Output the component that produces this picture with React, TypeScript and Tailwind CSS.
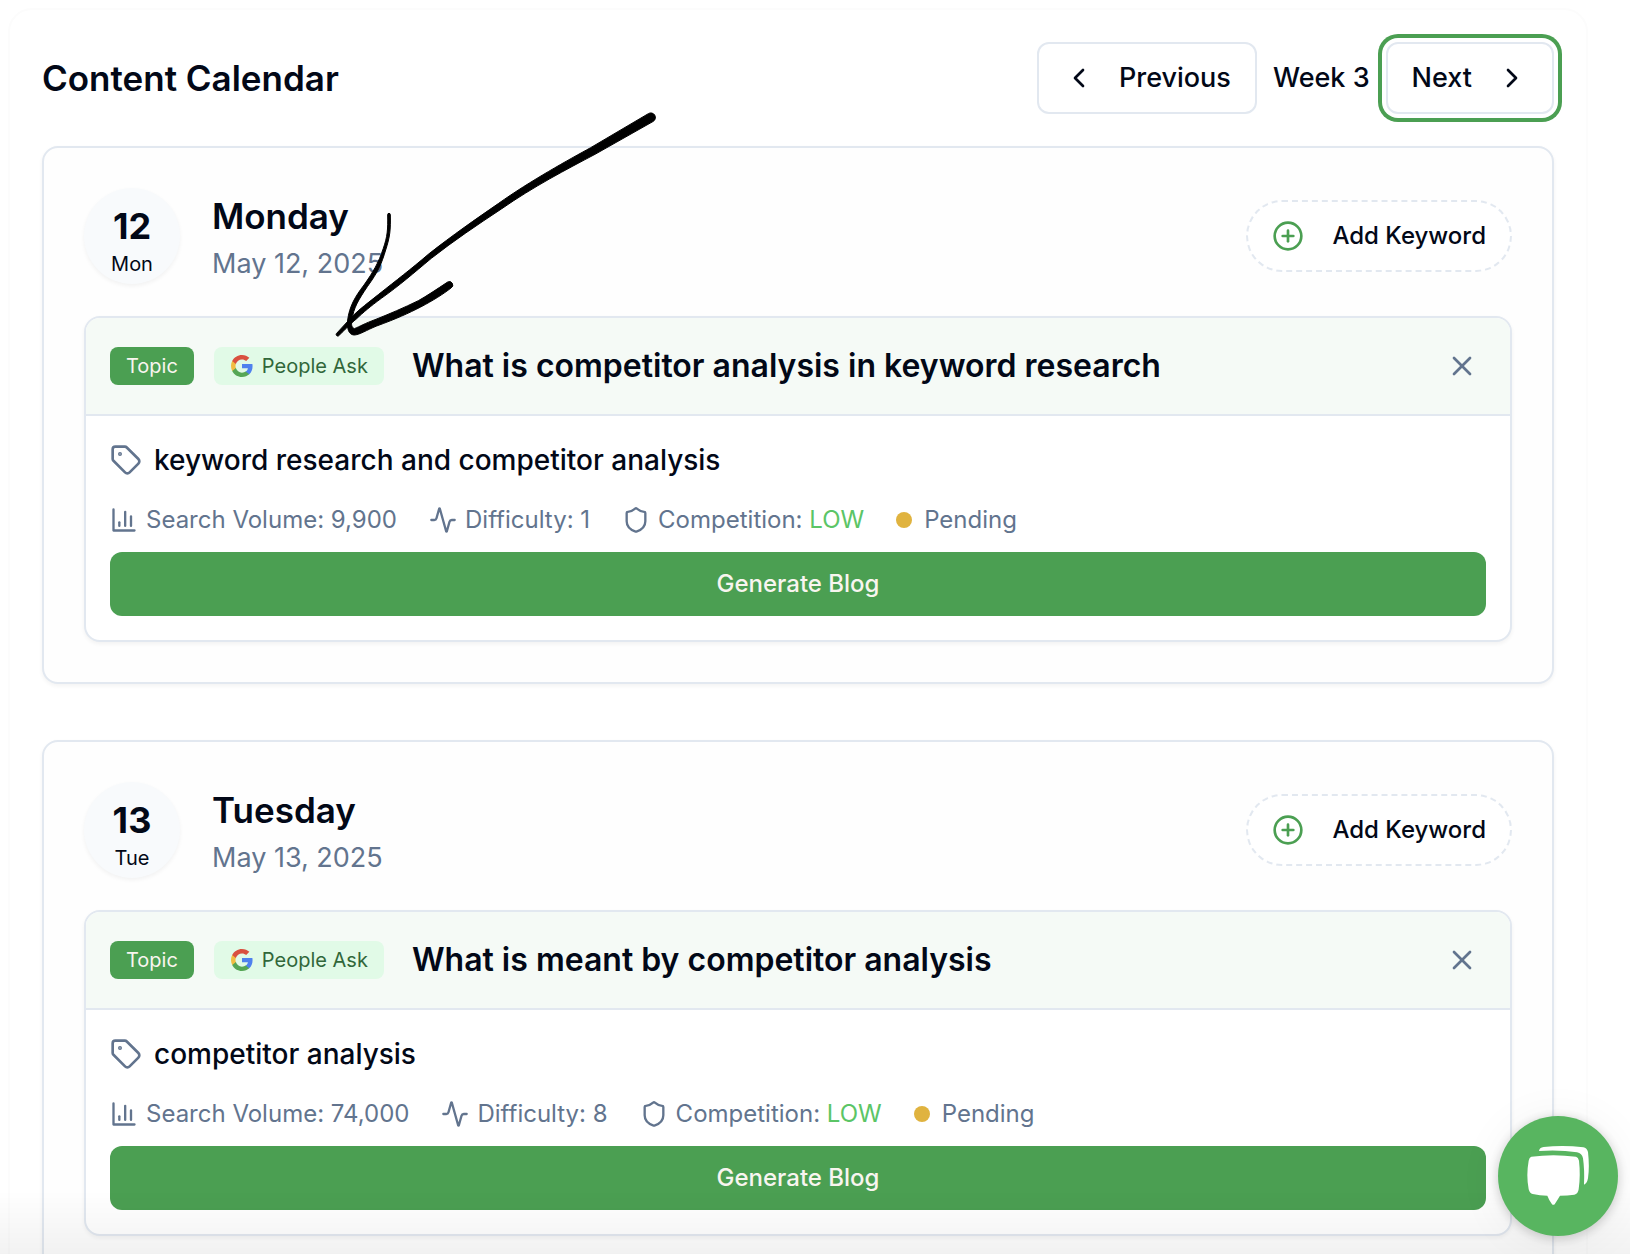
import { Activity, ChevronLeft, ChevronRight, CirclePlus, Shield, Tag, X } from "lucide-react";

type Day = {
  date: number;
  short: string;
  name: string;
  fullDate: string;
  title: string;
  keyword: string;
  volume: string;
  difficulty: number;
  competition: string;
  status: string;
};

const days: Day[] = [
  {
    date: 12,
    short: "Mon",
    name: "Monday",
    fullDate: "May 12, 2025",
    title: "What is competitor analysis in keyword research",
    keyword: "keyword research and competitor analysis",
    volume: "9,900",
    difficulty: 1,
    competition: "LOW",
    status: "Pending",
  },
  {
    date: 13,
    short: "Tue",
    name: "Tuesday",
    fullDate: "May 13, 2025",
    title: "What is meant by competitor analysis",
    keyword: "competitor analysis",
    volume: "74,000",
    difficulty: 8,
    competition: "LOW",
    status: "Pending",
  },
];

function GoogleIcon() {
  return (
    <svg viewBox="0 0 24 24" className="size-6" aria-hidden="true">
      <path
        fill="#4f81ee"
        d="M22.56 12.25c0-.78-.07-1.53-.2-2.25H12v4.26h5.92c-.26 1.37-1.04 2.53-2.21 3.31v2.77h3.57c2.08-1.92 3.28-4.74 3.28-8.09z"
      />
      <path
        fill="#55a655"
        d="M12 23c2.97 0 5.46-.98 7.28-2.66l-3.57-2.77c-.98.66-2.23 1.06-3.71 1.06-2.86 0-5.29-1.93-6.16-4.53H2.18v2.84C3.99 20.53 7.7 23 12 23z"
      />
      <path
        fill="#f1bd41"
        d="M5.84 14.09c-.22-.66-.35-1.36-.35-2.09s.13-1.43.35-2.09V7.07H2.18C1.43 8.55 1 10.22 1 12s.43 3.45 1.18 4.93l2.85-2.22.81-.62z"
      />
      <path
        fill="#d9503f"
        d="M12 5.38c1.62 0 3.06.56 4.21 1.64l3.15-3.15C17.45 2.09 14.97 1 12 1 7.7 1 3.99 3.47 2.18 7.07l3.66 2.84c.87-2.6 3.3-4.53 6.16-4.53z"
      />
    </svg>
  );
}

function BarChartIcon() {
  return (
    <svg
      viewBox="0 0 24 24"
      className="size-7"
      fill="none"
      stroke="currentColor"
      strokeWidth="2"
      strokeLinecap="round"
      strokeLinejoin="round"
      aria-hidden="true"
    >
      <path d="M3 3v18h18" />
      <path d="M18 17V9" />
      <path d="M13 17V5" />
      <path d="M8 17v-3" />
    </svg>
  );
}

function KeywordCard({ day }: { day: Day }) {
  return (
    <div className="overflow-hidden rounded-2xl border-2 border-slate-200 bg-white shadow-[0_2px_4px_rgba(0,0,0,0.05)]">
      {/* CARD HEADER */}
      <div className="flex h-[98px] items-center justify-between border-b-2 border-slate-200 bg-[#f5faf6] px-6">
        <div className="flex items-center">
          <span className="rounded-lg bg-[#4b9f52] px-4 py-1 text-xl leading-[30px] text-[#f8f5ef]">
            Topic
          </span>
          <span className="ml-5 flex items-center gap-2 rounded-lg bg-[#e1fae7] px-4 py-1 text-xl leading-[30px] text-[#31673a]">
            <GoogleIcon />
            People Ask
          </span>
          <h4 className="ml-7 text-[32px] leading-10 font-semibold">{day.title}</h4>
        </div>
        <button
          type="button"
          aria-label="Remove keyword"
          className="flex size-12 items-center justify-center text-slate-500"
        >
          <X className="size-8" />
        </button>
      </div>

      {/* CARD BODY */}
      <div className="px-6 pt-6 pb-6">
        <div className="flex items-center gap-3">
          <Tag className="size-8 text-slate-500" />
          <span className="text-[28px] leading-10 font-medium">{day.keyword}</span>
        </div>
        <div className="mt-6 mb-4 flex items-center gap-8 text-2xl leading-8 text-slate-500">
          <span className="flex items-center gap-2">
            <BarChartIcon />
            Search Volume: {day.volume}
          </span>
          <span className="flex items-center gap-2">
            <Activity className="size-7" />
            Difficulty: {day.difficulty}
          </span>
          <span className="flex items-center gap-2">
            <Shield className="size-7" />
            <span>
              Competition: <span className="text-[#5bc566]">{day.competition}</span>
            </span>
          </span>
          <span className="flex items-center gap-3">
            <span className="size-4 rounded-full bg-[#e0b33f]" />
            {day.status}
          </span>
        </div>
        <button
          type="button"
          className="h-16 w-full rounded-xl bg-[#4b9f52] text-2xl font-medium text-[#f8f5ef]"
        >
          Generate Blog
        </button>
      </div>
    </div>
  );
}

function DayCard({ day }: { day: Day }) {
  return (
    <section className="rounded-2xl border-2 border-slate-200 bg-[#fefefe] p-10 shadow-[0_2px_4px_rgba(0,0,0,0.05)]">
      <div className="mb-8 flex items-center justify-between">
        <div className="flex items-center gap-8">
          <div className="flex size-24 flex-col items-center justify-center rounded-full bg-slate-50 pt-4 shadow-[0_2px_4px_rgba(0,0,0,0.05)]">
            <span className="text-4xl leading-10 font-bold">{day.date}</span>
            <span className="text-xl leading-9">{day.short}</span>
          </div>
          <div>
            <h3 className="text-[35px] leading-14 font-semibold">{day.name}</h3>
            <p className="text-[27px] leading-10 text-slate-500">{day.fullDate}</p>
          </div>
        </div>
        <button
          type="button"
          className="flex h-18 items-center gap-7 rounded-full border-2 border-dashed border-slate-200 bg-white px-6 text-2xl font-medium"
        >
          <CirclePlus className="size-8 text-[#4b9f52]" />
          Add Keyword
        </button>
      </div>
      <KeywordCard day={day} />
    </section>
  );
}

function Arrow() {
  return (
    <svg
      viewBox="0 0 1200 810"
      className="pointer-events-none absolute top-[90px] left-[300px] w-[400px]"
      stroke="#000"
      strokeWidth="3"
      strokeLinejoin="round"
      aria-hidden="true"
    >
      <path d="M1045 71 L872 173 C810 207 690 273 596 340 C525 389 460 434 386 492 C330 540 290 570 236 613 C205 638 180 656 158 678 L109 731 A5 5 0 0 0 115 738 C140 715 150 702 169 687 C190 667 210 650 244 625 C300 585 340 550 394 505 C460 453 530 406 604 357 C700 290 800 238 885 193 L1060 94 A13 13 0 0 0 1045 71Z" />
      <path d="M263 374 C264 420 262 440 250 475 C235 520 220 545 192 585 C165 620 148 650 143 690 C140 715 146 734 162 735 C178 735 200 720 230 708 C290 686 325 670 362 651 C400 631 430 612 453 594 A9 9 0 0 0 443 576 C410 598 380 618 355 632 C310 654 270 671 225 689 C195 700 180 709 163 716 C155 712 153 705 156 690 C160 655 175 630 202 590 C235 545 245 520 257 480 C270 440 272 420 271 374 A4 4 0 0 0 263 374Z" />
    </svg>
  );
}

function ChatButton() {
  return (
    <button
      type="button"
      aria-label="Open chat"
      className="fixed right-3 bottom-[18px] flex size-30 items-center justify-center rounded-full bg-[#58b560] shadow-[0_2px_12px_rgba(0,0,0,0.2),0_4px_48px_rgba(0,0,0,0.06)]"
    >
      <svg viewBox="435 432 198 192" className="h-16" fill="#fff" aria-hidden="true">
        <path d="M454 470 Q520 461 588 470 Q595 472 597 482 Q602 526 596 568 Q594 582 583 584 Q562 587 540 587 Q534 597 525 611 Q520 618 515 611 Q506 598 502 587 Q480 587 458 582 Q449 580 446 568 Q438 526 446 482 Q448 472 454 470Z" />
        <path d="M477 453 Q478 443 491 441 Q550 434 610 442 Q621 444 624 456 Q629 500 624 535 Q621 551 612 554 Q614 510 609 475 Q606 460 591 457 Q540 449 477 453Z" />
      </svg>
    </button>
  );
}

export default function App() {
  return (
    <div className="relative h-screen overflow-hidden bg-white pt-2 pr-[42px] pl-2 font-['Inter',sans-serif] text-[#020817]">
      <main className="rounded-3xl border-2 border-[#fcfcfc] bg-white p-8">
        {/* PAGE HEADER */}
        <div className="mb-8 flex items-center justify-between">
          <h2 className="text-[35px] font-semibold">Content Calendar</h2>
          <div className="flex items-center gap-4 text-[27px] font-medium">
            <button
              type="button"
              className="flex h-18 items-center gap-6 rounded-xl border-2 border-slate-200 bg-white px-6"
            >
              <ChevronLeft className="size-8" />
              Previous
            </button>
            <span>Week 3</span>
            <button
              type="button"
              className="flex h-18 items-center gap-6 rounded-xl border-2 border-slate-200 bg-white px-6 ring-4 ring-[#4b9f52] ring-offset-4"
            >
              Next
              <ChevronRight className="size-8" />
            </button>
          </div>
        </div>

        {/* DAYS */}
        <div className="flex flex-col gap-14">
          {days.map((day) => (
            <DayCard key={day.date} day={day} />
          ))}
        </div>
      </main>

      <Arrow />
      <div className="pointer-events-none fixed inset-x-0 bottom-0 h-16 bg-linear-to-t from-black/5 to-transparent" />
      <ChatButton />
    </div>
  );
}
